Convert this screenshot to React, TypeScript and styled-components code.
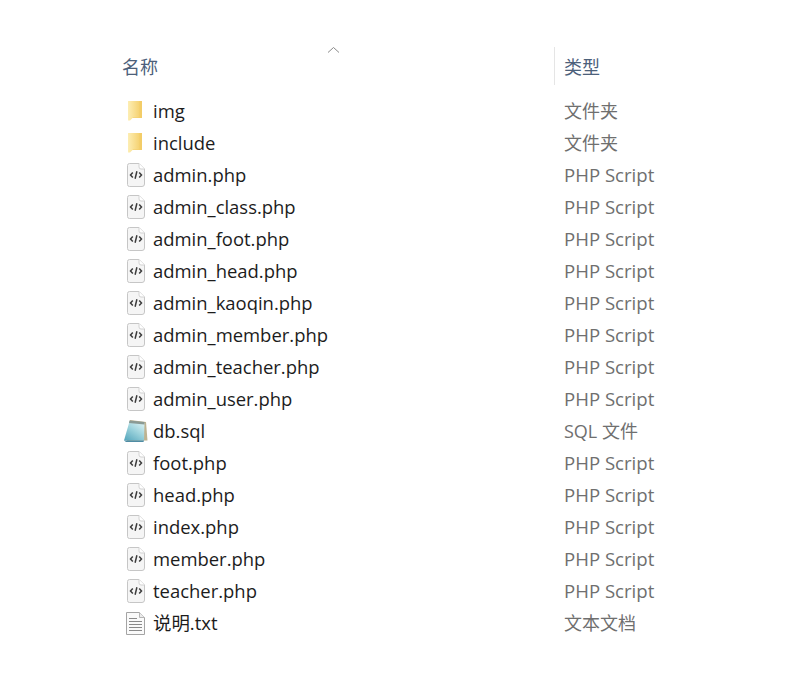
import React from "react";
import styled, { createGlobalStyle } from "styled-components";

const Global = createGlobalStyle`
  html, body { margin: 0; padding: 0; background: #fff; }
  body { font-family: "Open Sans", "Noto Sans CJK SC", sans-serif; }
`;

const Page = styled.div`
  width: 800px;
  height: 700px;
  box-sizing: border-box;
  padding: 41px 0 0 122px;
  overflow: hidden;
`;

const Header = styled.div`
  display: grid;
  grid-template-columns: 432px 1fr;
  height: 54px;
`;

const NameHead = styled.div`
  position: relative;
  display: flex;
  align-items: center;
  height: 50px;
  font-size: 18px;
  color: #4c607a;
`;

const SortMark = styled.svg`
  position: absolute;
  left: 205px;
  top: 5px;
`;

const TypeHead = styled.div`
  display: flex;
  align-items: center;
  height: 38px;
  margin-top: 6px;
  padding-left: 9px;
  border-left: 1px solid #e5e5e5;
  font-size: 18px;
  color: #4c607a;
`;

const List = styled.div`
  display: flex;
  flex-direction: column;
`;

const Row = styled.div`
  display: grid;
  grid-template-columns: 31px 411px 1fr;
  align-items: center;
  height: 32px;
`;

const IconBox = styled.div`
  display: flex;
  justify-content: center;
  width: 27px;
`;

const FileName = styled.div`
  padding-bottom: 2px;
  font-size: 18.45px;
  color: #1c1c1c;
  white-space: nowrap;
`;

const FileType = styled.div`
  padding-bottom: 2px;
  font-size: 18.6px;
  color: #6f6f6f;
  white-space: nowrap;
`;

const CjkType = styled(FileType)`
  font-size: 18px;
`;

const FolderIcon = () => (
  <svg width="18" height="22" viewBox="0 0 18 22">
    <defs>
      <linearGradient id="folderBody" x1="0" y1="0" x2="1" y2="0">
        <stop offset="0" stopColor="#fdeeb4" />
        <stop offset="1" stopColor="#f5d272" />
      </linearGradient>
    </defs>
    <path d="M1 1h14v17H1z" fill="#f3cd68" />
    <path d="M1 1h11.500v16.500H6L3 20.500H1z" fill="url(#folderBody)" />
  </svg>
);

const PhpIcon = () => (
  <svg width="18" height="24" viewBox="0 0 18 24">
    <path d="M2.500.5h9.500l5.500 5.500v15a2.500 2.500 0 0 1-2.500 2.500H2.500A2 2 0 0 1 .5 21.500v-19a2 2 0 0 1 2-2z" fill="#f5f5f5" stroke="#c6c6c6" />
    <path d="M12 .5v3.500a2 2 0 0 0 2 2h3.500" fill="#fff" stroke="#d2d2d2" />
    <path d="M5.800 9.500 3.500 12l2.300 2.500M12.200 9.500 14.500 12l-2.300 2.500M9.900 8.300 8.100 15.700" fill="none" stroke="#3c3c3c" strokeWidth="1.500" />
  </svg>
);

const SqlIcon = () => (
  <svg width="26" height="24" viewBox="0 0 26 24">
    <defs>
      <linearGradient id="sqlPage" x1="0.8" y1="0" x2="0.1" y2="1">
        <stop offset="0" stopColor="#d9f0f2" />
        <stop offset="0.45" stopColor="#9dd3dc" />
        <stop offset="1" stopColor="#58a8be" />
      </linearGradient>
    </defs>
    <path d="M7 1 23 3 24.500 21.500 4 22z" fill="#a89a6c" opacity="0.75" />
    <path d="M6.500 2.500 21.500 4 21 21.500 1 21.500z" fill="url(#sqlPage)" />
    <path d="M6.500 1.500 21.500 3v2.500L6 4z" fill="#8a9a94" />
    <path d="M1 21.500h20l-.5 1.500H3z" fill="#4f8ca4" />
  </svg>
);

const TextIcon = () => (
  <svg width="19" height="23" viewBox="0 0 19 23">
    <path d="M.5.500h13l5 5v17H.5z" fill="#fafafa" stroke="#a4a4a4" />
    <path d="M13.500.5v5h5" fill="#ececec" stroke="#b5b5b5" />
    <path d="M3 6.500h8M3 9.500h13M3 12.500h13M3 15.500h13M3 18.500h13" stroke="#8a8a8a" strokeWidth="1.200" />
  </svg>
);

type Kind = "folder" | "php" | "sql" | "text";

const files: { name: string; type: string; kind: Kind }[] = [
  { name: "img", type: "文件夹", kind: "folder" },
  { name: "include", type: "文件夹", kind: "folder" },
  { name: "admin.php", type: "PHP Script", kind: "php" },
  { name: "admin_class.php", type: "PHP Script", kind: "php" },
  { name: "admin_foot.php", type: "PHP Script", kind: "php" },
  { name: "admin_head.php", type: "PHP Script", kind: "php" },
  { name: "admin_kaoqin.php", type: "PHP Script", kind: "php" },
  { name: "admin_member.php", type: "PHP Script", kind: "php" },
  { name: "admin_teacher.php", type: "PHP Script", kind: "php" },
  { name: "admin_user.php", type: "PHP Script", kind: "php" },
  { name: "db.sql", type: "SQL 文件", kind: "sql" },
  { name: "foot.php", type: "PHP Script", kind: "php" },
  { name: "head.php", type: "PHP Script", kind: "php" },
  { name: "index.php", type: "PHP Script", kind: "php" },
  { name: "member.php", type: "PHP Script", kind: "php" },
  { name: "teacher.php", type: "PHP Script", kind: "php" },
  { name: "说明.txt", type: "文本文档", kind: "text" },
];

const icons: Record<Kind, React.FC> = {
  folder: FolderIcon,
  php: PhpIcon,
  sql: SqlIcon,
  text: TextIcon,
};

export default function App() {
  return (
    <Page>
      <Global />
      <Header>
        <NameHead>
          名称
          <SortMark width="13" height="8" viewBox="0 0 13 8">
            <path d="M1 6.500 6.500 1.500 12 6.500" fill="none" stroke="#8a8a8a" />
          </SortMark>
        </NameHead>
        <TypeHead>类型</TypeHead>
      </Header>
      <List>
        {files.map((f) => {
          const Icon = icons[f.kind];
          const Type = f.kind === "php" ? FileType : CjkType;
          return (
            <Row key={f.name}>
              <IconBox>
                <Icon />
              </IconBox>
              <FileName>{f.name}</FileName>
              <Type>{f.type}</Type>
            </Row>
          );
        })}
      </List>
    </Page>
  );
}
